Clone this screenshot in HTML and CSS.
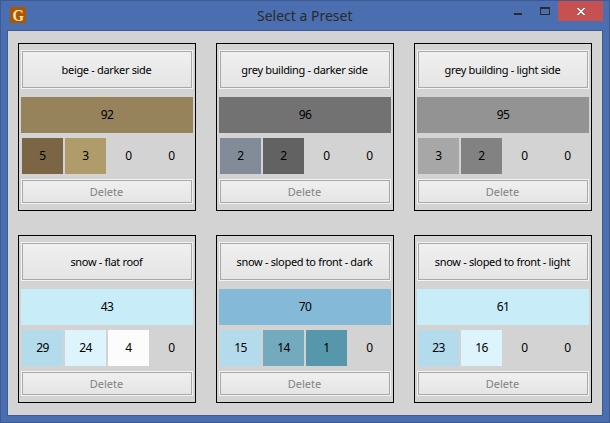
FILE: index.html
```html
<!DOCTYPE html>
<html lang="en">
<head>
<meta charset="utf-8">
<title>Select a Preset</title>
<link rel="stylesheet" href="styles.css">
</head>
<body>
<div class="window">
  <header class="titlebar">
    <svg class="app-icon" width="16" height="16" viewBox="0 0 16 16"><rect width="16" height="16" rx="1" fill="#ad5600"/><text x="2.5" y="13.8" textLength="11.5" lengthAdjust="spacingAndGlyphs">G</text></svg>
    <h1 class="title">Select a Preset</h1>
    <div class="controls">
      <svg class="minmax" width="42" height="20" viewBox="0 0 42 20" shape-rendering="crispEdges"><path d="M0 12h8v2H0zM26 6h10v8H26zM27 8v5h8V8z" fill="#2a2a2a" fill-rule="evenodd"/></svg>
      <span class="close"><svg width="8" height="7" viewBox="0 0 8 7" shape-rendering="crispEdges"><path d="M0 0h2v1h1v1h2V1h1V0h2v1H7v1H6v1H5v1h1v1h1v1h1v1H6V6H5V5H3v1H2v1H0V6h1V5h1V4h1V3H2V2H1V1H0z" fill="#fff"/></svg></span>
    </div>
  </header>
  <main class="client">
    <section class="card">
      <button class="btn name">beige - darker side</button>
      <div class="main beige">92</div>
      <div class="cells"><span class="brown">5</span><span class="tan">3</span><span>0</span><span>0</span></div>
      <button class="btn delete" disabled>Delete</button>
    </section>
    <section class="card">
      <button class="btn name">grey building - darker side</button>
      <div class="main grey-dark">96</div>
      <div class="cells"><span class="slate">2</span><span class="charcoal">2</span><span>0</span><span>0</span></div>
      <button class="btn delete" disabled>Delete</button>
    </section>
    <section class="card">
      <button class="btn name">grey building - light side</button>
      <div class="main grey-mid">95</div>
      <div class="cells"><span class="grey-light">3</span><span class="grey">2</span><span>0</span><span>0</span></div>
      <button class="btn delete" disabled>Delete</button>
    </section>
    <section class="card">
      <button class="btn name">snow - flat roof</button>
      <div class="main ice">43</div>
      <div class="cells"><span class="sky">29</span><span class="frost">24</span><span class="white">4</span><span>0</span></div>
      <button class="btn delete" disabled>Delete</button>
    </section>
    <section class="card">
      <button class="btn name">snow - sloped to front - dark</button>
      <div class="main blue">70</div>
      <div class="cells"><span class="sky">15</span><span class="teal">14</span><span class="deep">1</span><span>0</span></div>
      <button class="btn delete" disabled>Delete</button>
    </section>
    <section class="card">
      <button class="btn name">snow - sloped to front - light</button>
      <div class="main ice">61</div>
      <div class="cells"><span class="sky">23</span><span class="frost">16</span><span>0</span><span>0</span></div>
      <button class="btn delete" disabled>Delete</button>
    </section>
  </main>
</div>
</body>
</html>
```
FILE: styles.css
```css
* { box-sizing: border-box; }
body { margin: 0; font-family: "Noto Sans", sans-serif; color: #000; }
.window {
  width: 610px;
  height: 423px;
  padding: 0 6px 6px;
  border: 1px solid #3d5a92;
  background: #4a6eaf;
}
.titlebar { display: flex; justify-content: space-between; height: 29px; padding-left: 3px; }
.app-icon { flex: none; margin-top: 6px; overflow: visible; }
.app-icon text { fill: #ffe3b5; font: bold 17px "Liberation Serif", serif; }
.title {
  flex: 1;
  margin: 0 0 0 231px;
  font-size: 14px;
  font-weight: 400;
  line-height: 29px;
  color: #2a2a2a;
  white-space: nowrap;
}
.controls { display: flex; }
.minmax { margin: 0 2px 0 0; }
.close {
  display: flex;
  width: 45px;
  height: 20px;
  padding: 7px 0 0 19px;
  background: #c75050;
}
.client {
  display: grid;
  grid-template-columns: repeat(3, 178px);
  grid-auto-rows: 168px;
  gap: 24px 20px;
  width: 596px;
  height: 386px;
  padding: 12px 10px;
  border: 1px solid #3d5a92;
  background: #d3d3d3;
}
.card { display: flex; flex-direction: column; padding: 6px 2px; border: 1px solid #000; }
.btn {
  width: 172px;
  padding: 0;
  border: 1px solid #f3f3f3;
  outline: 1px solid #a9a9a9;
  outline-offset: -2px;
  background: linear-gradient(#f0f0f0, #e4e4e4);
  font: 11px "Noto Sans", sans-serif;
  white-space: nowrap;
}
.name { height: 39px; padding-right: 1px; color: #000; letter-spacing: -0.33px; }
.delete { height: 25px; padding-right: 1px; color: #838383; }
.main {
  height: 36px;
  margin: 8px 0 5px;
  font-size: 12px;
  line-height: 36px;
  letter-spacing: -0.6px;
  text-align: center;
}
.cells {
  display: grid;
  grid-template-columns: repeat(4, 41px);
  gap: 2px;
  height: 36px;
  margin: 0 1px 5px;
  font-size: 12px;
  line-height: 36px;
  letter-spacing: -0.6px;
  text-align: center;
}
.beige { background: #96825b; }
.brown { background: #7b6545; }
.tan { background: #b09b6b; }
.grey-dark { background: #727272; }
.slate { background: #828c99; }
.charcoal { background: #626262; }
.grey-mid { background: #939393; }
.grey-light { background: #a7a7a7; }
.grey { background: #828282; }
.ice { background: #c8ecf8; }
.sky { background: #b3dbec; }
.frost { background: #def4fc; }
.white { background: #fcfcfc; }
.blue { background: #84b9d7; }
.teal { background: #73aabe; }
.deep { background: #5797ac; }
```
